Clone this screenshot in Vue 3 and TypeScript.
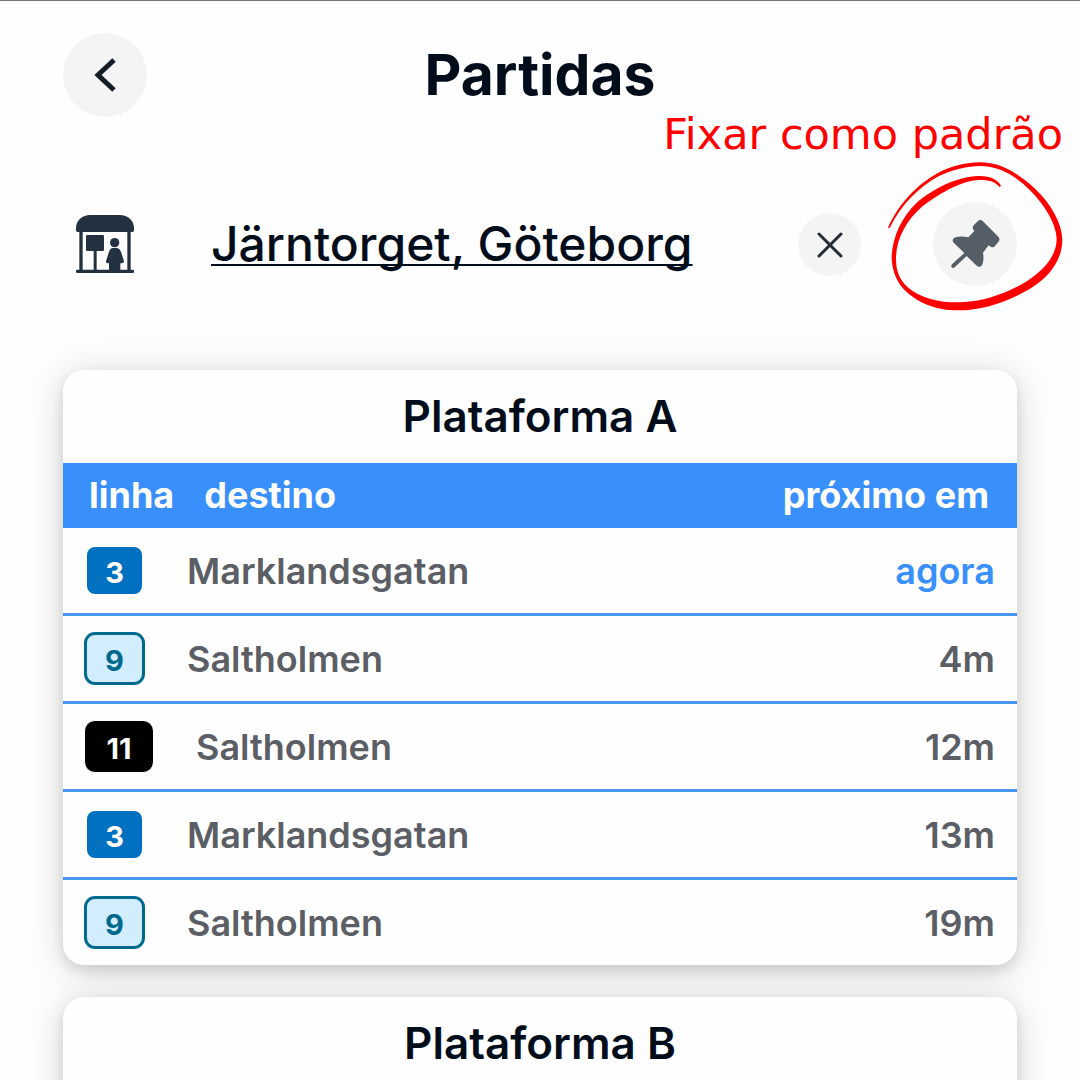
<script setup lang="ts">
interface Departure {
  line: string
  destination: string
  next: string
}

interface Platform {
  name: string
  departures: Departure[]
}

const platforms: Platform[] = [
  {
    name: 'Plataforma A',
    departures: [
      { line: '3', destination: 'Marklandsgatan', next: 'agora' },
      { line: '9', destination: 'Saltholmen', next: '4m' },
      { line: '11', destination: 'Saltholmen', next: '12m' },
      { line: '3', destination: 'Marklandsgatan', next: '13m' },
      { line: '9', destination: 'Saltholmen', next: '19m' },
    ],
  },
  { name: 'Plataforma B', departures: [] },
]
</script>

<template>
  <main class="page">
    <header class="top">
      <button class="round" type="button" aria-label="Voltar">
        <svg class="icon" viewBox="0 0 84 84" aria-hidden="true">
          <path d="M51 27 L35 42 L51 57" fill="none" stroke="#141c26" stroke-width="5" />
        </svg>
      </button>
      <h1 class="title">Partidas</h1>
    </header>

    <section class="station">
      <svg class="shelter" viewBox="78 645 174 174" aria-hidden="true">
        <g fill="#243140">
          <path d="M78 691 V682 C80 660 97 645 120 645 H210 C233 645 250 660 252 682 V691 Q252 696 247 696 H83 Q78 696 78 691 Z" />
          <path d="M88 694 H98 V810 H88 Z M232 694 H242 V810 H232 Z M131 750 H140 V810 H131 Z" />
          <rect x="108" y="705" width="54" height="48" rx="4" />
          <rect x="78" y="809" width="174" height="10" rx="4" />
          <circle cx="194" cy="728" r="14" />
          <path d="M186 744 H202 Q209 746 213 755 L222 784 Q222 790 211 790 V812 H177 V790 Q167 790 168 784 L177 755 Q180 746 186 744 Z" />
        </g>
      </svg>
      <a class="name" href="#">Järntorget, Göteborg</a>
      <button class="round small" type="button" aria-label="Limpar">
        <svg class="icon" viewBox="0 0 63 63" aria-hidden="true">
          <path d="M21 21 L43 43 M43 21 L21 43" fill="none" stroke="#242c36" stroke-width="3" stroke-linecap="round" />
        </svg>
      </button>
      <div class="pin">
        <button class="round" type="button" aria-label="Fixar como padrão">
          <svg class="icon" viewBox="878 366 252 252" aria-hidden="true">
            <path
              d="M1013 423 Q1020 417 1027 423 L1074 470 Q1081 478 1074 486 L1062 500 Q1057 504 1051 500 L1045 496 L1028 518 Q1032 540 1025 556 Q1018 564 1010 558 L979 528 L943 562 Q938 566 934 562 Q931 558 935 553 L972 519 L940 488 Q933 480 942 473 Q960 466 984 472 L1002 453 Q993 444 1000 436 Z"
              fill="#555d66"
            />
          </svg>
        </button>
        <span class="note">Fixar como padrão</span>
        <svg class="ring" viewBox="744 245 525 447" aria-hidden="true">
          <path
            d="M744 442 C775 370 835 310 890 280 C935 255 985 245 1025 246 C1090 248 1140 285 1185 325 C1235 372 1266 430 1267 478 C1267 540 1225 595 1165 628 C1100 665 1030 690 955 690 C880 690 825 662 790 625 C765 598 755 560 755 530 C757 470 785 410 830 367 C880 325 950 289 1015 287 C1050 286 1075 298 1083 317 L1078 320 C1065 303 1045 299 1018 299 C960 301 890 345 845 380 C800 420 768 475 768 535 C768 575 780 600 805 622 C845 655 900 667 960 666 C1030 664 1095 640 1145 612 C1205 578 1250 530 1250 475 C1248 430 1215 375 1170 330 C1125 285 1080 258 1020 257 C985 257 935 268 893 289 C835 322 785 370 749 443 Z"
            fill="#ff0000"
          />
        </svg>
      </div>
    </section>

    <div class="platforms">
      <section v-for="platform in platforms" :key="platform.name" class="card">
        <h2 class="platform">{{ platform.name }}</h2>
        <table v-if="platform.departures.length" class="board">
          <thead>
            <tr class="head">
              <th scope="col">linha</th>
              <th scope="col" class="grow">destino</th>
              <th scope="col">próximo em</th>
            </tr>
          </thead>
          <tbody>
            <tr v-for="(departure, i) in platform.departures" :key="i" class="row">
              <td>
                <span class="badge" :class="'line-' + departure.line">{{ departure.line }}</span>
              </td>
              <td class="grow">{{ departure.destination }}</td>
              <td :class="{ now: departure.next === 'agora' }">{{ departure.next }}</td>
            </tr>
          </tbody>
        </table>
      </section>
    </div>
  </main>
</template>

<style>
body {
  margin: 0;
  background: #fefefe;
}
</style>

<style scoped>
.page {
  box-sizing: border-box;
  height: 100vh;
  overflow: hidden;
  padding: 32px 63px 0;
  border-top: 1px solid #757575;
  font-family: Inter, Roboto, sans-serif;
  color: #020d1b;
}

.top {
  display: grid;
  grid-template-columns: 84px 1fr 84px;
  align-items: center;
}

.title {
  margin: 0;
  font-size: 57px;
  line-height: 84px;
  font-weight: 700;
  text-align: center;
}

.round {
  display: block;
  width: 84px;
  height: 84px;
  padding: 0;
  border: 0;
  border-radius: 50%;
  background: #f4f4f4;
}

.small {
  width: 63px;
  height: 63px;
}

.icon {
  display: block;
  width: 100%;
  height: 100%;
}

.station {
  display: flex;
  align-items: center;
  margin: 85px 0 84px;
}

.shelter {
  flex: none;
  width: 58px;
  height: 58px;
  margin: 0 77px 0 13px;
}

.name {
  flex: 1;
  font-size: 48px;
  line-height: 60px;
  font-weight: 500;
  color: inherit;
  white-space: nowrap;
  text-decoration: underline;
  text-decoration-thickness: 2px;
  text-decoration-skip-ink: none;
  text-underline-offset: 3px;
}

.pin {
  position: relative;
  margin-left: 72px;
}

.note {
  position: absolute;
  right: -46px;
  bottom: 128px;
  font-family: "DejaVu Sans", sans-serif;
  font-size: 43px;
  line-height: 48px;
  color: #ff0000;
  white-space: nowrap;
}

.ring {
  position: absolute;
  left: -45px;
  top: -40px;
  width: 175px;
  height: 149px;
  pointer-events: none;
}

.platforms {
  display: flex;
  flex-direction: column;
  gap: 32px;
}

.card {
  min-height: 180px;
  border-radius: 21px;
  overflow: hidden;
  background: #fefefe;
  box-shadow: 0 6px 14px rgba(0, 0, 0, 0.12), 0 4px 40px rgba(0, 0, 0, 0.15);
}

.platform {
  margin: 0;
  font-size: 44px;
  line-height: 93px;
  font-weight: 600;
  text-align: center;
}

.board {
  display: block;
  font-size: 36px;
  font-weight: 600;
}

.board thead,
.board tbody {
  display: block;
}

.board th,
.board td {
  padding: 0;
  font-weight: 600;
  text-align: left;
}

.board th {
  font-weight: 700;
}

.board .grow {
  flex: 1;
}

.head {
  display: flex;
  gap: 30px;
  padding: 0 28px 0 26px;
  line-height: 65px;
  color: #ffffff;
  background: #398ffc;
}

.row {
  display: flex;
  gap: 42px;
  align-items: center;
  height: 85px;
  padding: 0 22px 0 21px;
  color: #5b5f65;
}

.row + .row {
  border-top: 3px solid #4a95ee;
}

.row .now {
  color: #398ffc;
}

.badge {
  display: block;
  box-sizing: border-box;
  min-width: 61px;
  height: 53px;
  padding-top: 2px;
  border: 3px solid #fefefe;
  border-radius: 11px;
  font-size: 29px;
  line-height: 48px;
  font-weight: 700;
  text-align: center;
  color: #ffffff;
}

.line-3 {
  background: #0070c0;
}

.line-9 {
  border-color: #006a8e;
  color: #006a8e;
  background: #d2edfe;
}

.line-11 {
  min-width: 70px;
  border-width: 1px;
  line-height: 52px;
  background: #000000;
}
</style>
